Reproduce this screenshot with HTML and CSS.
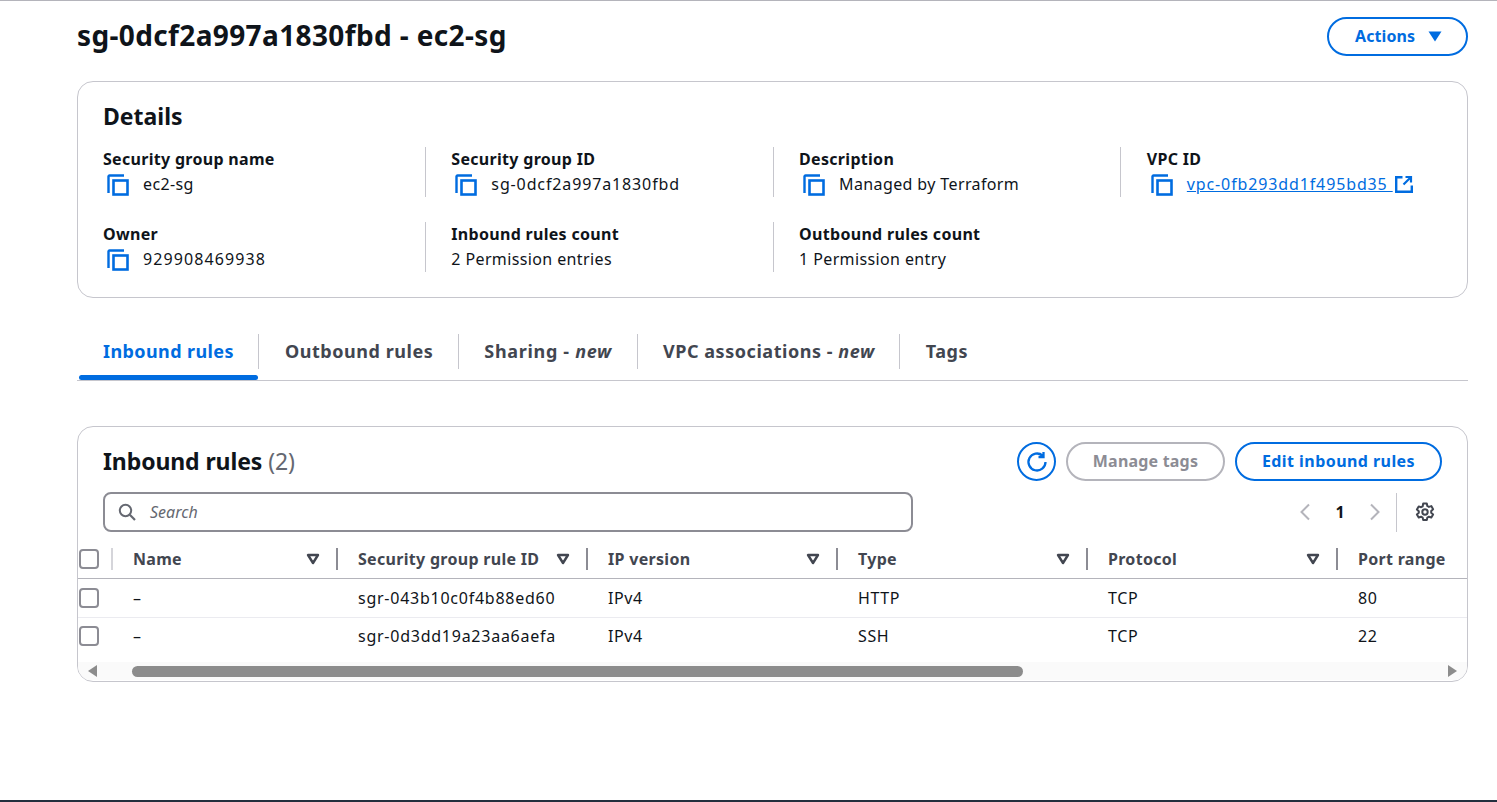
FILE: index.html
```html
<!DOCTYPE html>
<html>
<head>
<meta charset="utf-8">
<meta content="width=device-width, initial-scale=1.0" name="viewport">
<title>sg-0dcf2a997a1830fbd - ec2-sg</title>
<link rel="stylesheet" href="styles.css">
</head>
<body>
<svg class="defs" width="0" height="0">
  <symbol id="copy" viewBox="0 0 22 22">
    <path d="M1.500 19V2.500a1 1 0 0 1 1-1H17" fill="none" stroke="currentColor" stroke-width="2.400"/>
    <rect x="6.500" y="6.500" width="14" height="14" fill="none" stroke="currentColor" stroke-width="2.600"/>
  </symbol>
  <symbol id="sort" viewBox="0 0 14 12">
    <path d="M2 2h10L7 10z" fill="none" stroke="currentColor" stroke-width="2.400" stroke-linejoin="round"/>
  </symbol>
</svg>
<main class="page">
  <header class="page-head">
    <h1>sg-0dcf2a997a1830fbd - ec2-sg</h1>
    <button class="btn btn-actions">Actions <svg width="14" height="11" viewBox="0 0 14 11"><path d="M0.500 0.500h13L7 10.500z" fill="currentColor"/></svg></button>
  </header>

  <section class="card details">
    <h2>Details</h2>
    <div class="detail-grid">
      <div class="detail">
        <b>Security group name</b>
        <span class="val"><svg class="copy"><use href="#copy"/></svg>ec2-sg</span>
      </div>
      <div class="detail">
        <b>Security group ID</b>
        <span class="val id"><svg class="copy"><use href="#copy"/></svg>sg-0dcf2a997a1830fbd</span>
      </div>
      <div class="detail">
        <b>Description</b>
        <span class="val"><svg class="copy"><use href="#copy"/></svg>Managed by Terraform</span>
      </div>
      <div class="detail">
        <b>VPC ID</b>
        <span class="val id"><svg class="copy"><use href="#copy"/></svg><a class="link">vpc-0fb293dd1f495bd35 </a><svg class="ext" width="18" height="18" viewBox="0 0 18 18"><path d="M7.500 2.200H1.200v14.600h15.600V10.500" fill="none" stroke="currentColor" stroke-width="2.400"/><path d="M10.500 2h5.500v5.500M15.500 2.500L8.500 9.500" fill="none" stroke="currentColor" stroke-width="2.200"/></svg></span>
      </div>
      <div class="detail">
        <b>Owner</b>
        <span class="val digits"><svg class="copy"><use href="#copy"/></svg>929908469938</span>
      </div>
      <div class="detail">
        <b>Inbound rules count</b>
        <span class="val">2 Permission entries</span>
      </div>
      <div class="detail">
        <b>Outbound rules count</b>
        <span class="val">1 Permission entry</span>
      </div>
    </div>
  </section>

  <nav class="tabs">
    <a class="tab active">Inbound rules</a>
    <a class="tab">Outbound rules</a>
    <a class="tab tab-sharing">Sharing - <em>new</em></a>
    <a class="tab tab-vpc">VPC associations - <em>new</em></a>
    <a class="tab">Tags</a>
  </nav>

  <section class="card rules">
    <div class="rules-head">
      <h2>Inbound rules <span class="count">(2)</span></h2>
      <div class="actions">
        <button class="btn btn-icon"><svg width="22" height="22" viewBox="0 0 22 22"><path d="M19.500 11a8.500 8.500 0 1 1-2.900-6.400M17.500 1v5h-5" fill="none" stroke="currentColor" stroke-width="2.300"/></svg></button>
        <button class="btn btn-off">Manage tags</button>
        <button class="btn btn-edit">Edit inbound rules</button>
      </div>
    </div>
    <div class="tools">
      <label class="search">
        <svg width="18" height="18" viewBox="0 0 18 18"><circle cx="7.500" cy="7.500" r="5.700" fill="none" stroke="currentColor" stroke-width="2"/><path d="M11.800 11.800L17 17" stroke="currentColor" stroke-width="2.200"/></svg>
        <i>Search</i>
      </label>
      <div class="pager">
        <svg class="chev" width="12" height="18" viewBox="0 0 12 18"><path d="M10 1.500L2.500 9l7.500 7.500" fill="none" stroke="currentColor" stroke-width="2"/></svg>
        <b>1</b>
        <svg class="chev" width="12" height="18" viewBox="0 0 12 18"><path d="M2 1.500L9.500 9 2 16.500" fill="none" stroke="currentColor" stroke-width="2"/></svg>
        <span class="pager-sep"></span>
        <svg class="gear" width="20" height="20" viewBox="0 0 20 20"><path d="M8.200 1.500h3.600l.5 2.500 1.600.9 2.400-.8 1.800 3.100-1.900 1.700v1.800l1.900 1.700-1.800 3.100-2.400-.8-1.600.9-.5 2.500H8.200l-.5-2.500-1.600-.9-2.400.8-1.800-3.100 1.900-1.700V9.200L1.900 7.500l1.800-3.100 2.400.8 1.600-.9z" fill="none" stroke="currentColor" stroke-width="2" stroke-linejoin="round"/><circle cx="10" cy="10" r="2.700" fill="none" stroke="currentColor" stroke-width="2"/></svg>
      </div>
    </div>
    <div class="table-wrap">
      <table>
        <colgroup>
          <col class="c-check"><col class="c-name"><col class="c-std"><col class="c-std"><col class="c-std"><col class="c-std"><col class="c-std">
        </colgroup>
        <thead>
          <tr>
            <th class="check"><span class="box"></span></th>
            <th><div class="th">Name <svg class="sort"><use href="#sort"/></svg></div></th>
            <th><div class="th">Security group rule ID <svg class="sort"><use href="#sort"/></svg></div></th>
            <th><div class="th">IP version <svg class="sort"><use href="#sort"/></svg></div></th>
            <th><div class="th">Type <svg class="sort"><use href="#sort"/></svg></div></th>
            <th><div class="th">Protocol <svg class="sort"><use href="#sort"/></svg></div></th>
            <th><div class="th">Port range</div></th>
          </tr>
        </thead>
        <tbody>
          <tr>
            <td class="check"><span class="box"></span></td>
            <td>–</td><td class="rule-id">sgr-043b10c0f4b88ed60</td><td>IPv4</td><td>HTTP</td><td>TCP</td><td>80</td>
          </tr>
          <tr>
            <td class="check"><span class="box"></span></td>
            <td>–</td><td class="rule-id">sgr-0d3dd19a23aa6aefa</td><td>IPv4</td><td>SSH</td><td>TCP</td><td>22</td>
          </tr>
        </tbody>
      </table>
    </div>
    <div class="hscroll">
      <span class="arrow left"></span>
      <span class="thumb"></span>
      <span class="arrow right"></span>
    </div>
  </section>
</main>
<div class="foot-line"></div>
</body>
</html>
```

FILE: styles.css
```css
*{box-sizing:border-box}
html,body{height:100%}
body{margin:0;height:802px;overflow:hidden;display:flex;flex-direction:column;background:#fff;border-top:1px solid #b4b4bb;font-family:"Noto Sans","Open Sans",sans-serif;font-size:16px;line-height:20px;color:#0f141a}
.defs{display:block}
.page{flex:1;padding:0 29px 0 77px}
h1,h2{margin:0;font-weight:700}
button{font-family:inherit;background:#fff;cursor:pointer}

.page-head{display:flex;justify-content:space-between;align-items:center;height:70px;padding-bottom:1px}
h1{font-size:28px;line-height:36px;letter-spacing:.37px;margin-top:-2px}
.btn{height:39px;border:2px solid #006ce0;border-radius:20px;color:#006ce0;font-size:16px;font-weight:700;padding:0 25px}
.btn-actions{display:flex;align-items:center;gap:13px;width:141px;margin-top:1px;padding:0 0 0 26px;letter-spacing:.1px}

.card{border:1px solid #c6c6cd;border-radius:16px}
h2{font-size:23px;line-height:30px}
.details{height:217px;margin-top:10px;padding:19px 25px 0}
.detail-grid{display:grid;grid-template-columns:repeat(4,347.750px);row-gap:25px;margin-top:16px}
.detail{height:50px;padding:2px 0 0;display:flex;flex-direction:column;gap:5px}
.detail b{font-size:16px;line-height:20px;letter-spacing:.3px}
.detail:nth-child(n+2){padding-left:25.600px;margin-left:-26px;border-left:1px solid #c6c6cd}
.detail:nth-child(5){padding-left:0;margin-left:0;border-left:0}
.val{display:flex;align-items:center;height:20px;color:#0f141a;letter-spacing:.38px}
.val.id{letter-spacing:.87px}
.val.digits{letter-spacing:1.100px}
.copy{width:22px;height:22px;margin:2px 14px 0 4px;color:#006ce0;flex:none}
.link{color:#006ce0;text-decoration:underline;white-space:pre}
.ext{color:#006ce0;margin-left:2px}

.tabs{display:flex;height:47px;margin-top:36px;border-bottom:1px solid #c6c6cd}
.tab{position:relative;height:35px;padding:7px 25px 0 26px;border-right:1px solid #c6c6cd;font-size:18px;line-height:20px;font-weight:700;color:#424650;white-space:pre;letter-spacing:.55px}
.tab:last-child{border-right:0}
.tab em{font-style:italic}
.tab-sharing{padding-left:25px;letter-spacing:.68px}
.tab-vpc{padding:7px 24px 0 25px}
.active{color:#006ce0;padding-right:24px;letter-spacing:.4px}
.active:after{content:"";position:absolute;left:2px;right:0;bottom:-11px;height:5px;border-radius:3px;background:#006ce0}

.rules{height:256px;margin-top:45px;overflow:hidden}
.rules-head{display:flex;justify-content:space-between;align-items:center;height:39px;margin-top:15px;padding:0 25px}
.rules-head h2{letter-spacing:-.1px;margin-top:-2px}
.count{font-weight:400;color:#656871}
.actions{display:flex;gap:10px}
.actions .btn{padding-bottom:2px}
.actions .btn-icon{width:39px;padding:0;display:flex;align-items:center;justify-content:center}
.actions .btn-off{border-color:#b4b4bb;color:#8c8c94;width:159px;padding:0 0 2px;letter-spacing:.2px}
.actions .btn-edit{width:207px;padding:0 0 2px;letter-spacing:.44px}

.tools{display:flex;justify-content:space-between;align-items:center;height:40px;margin-top:11px;padding:0 32px 0 25px}
.search{display:flex;align-items:center;gap:14px;width:810px;height:40px;padding-left:13px;border:2px solid #8c8c94;border-radius:8px;color:#656871}
.search svg{color:#656871;flex:none}
.pager{display:flex;align-items:center;height:40px}
.chev{color:#b4b4bb}
.pager b{width:58px;text-align:center;font-size:16px}
.pager-sep{width:1px;height:39px;margin:0 18px 0 15px;background:#c6c6cd}
.gear{color:#424650}

.table-wrap{height:121px;margin-top:9px;overflow:hidden}
table{border-collapse:collapse;table-layout:fixed;width:1508px}
.c-check{width:33px}
.c-name{width:225px}
.c-std{width:250px}
th{height:37px;padding:0;text-align:left;font-weight:700;font-size:16px;color:#424650;border-bottom:1px solid #b4b4bb;letter-spacing:.3px}
td{height:38px;padding:0 0 0 22px;color:#0f141a;border-bottom:1px solid #ebebf0;letter-spacing:.6px}
tbody tr:first-child td{height:39px;padding-top:1px}
td.rule-id{letter-spacing:.75px}
tbody tr:last-child td{border-bottom:0}
th.check,td.check{padding:0 0 0 1px}
tbody tr:first-child td.check{padding-top:1px}
.box{display:block;width:20px;height:20px;border:2px solid #8c8c94;border-radius:4px}
.th{display:flex;align-items:center;justify-content:space-between;height:22px;padding:0 16px 0 20px;border-left:2px solid #8c8c94}
.check + th .th{border-left-color:#d5d5da}
.sort{width:14px;height:12px;color:#424650}

.hscroll{display:flex;align-items:center;height:18px;padding:0 10px;background:#fafafa}
.arrow{width:0;height:0;border-style:solid;border-color:transparent;border-width:6px 0}
.arrow.left{border-right:9px solid #8c8c8c}
.arrow.right{border-left:9px solid #8c8c8c;margin-left:auto}
.thumb{width:891px;height:11px;margin-left:35px;border-radius:6px;background:#8c8c8c}

.foot-line{flex:none;height:2px;background:#232f3e}
```
